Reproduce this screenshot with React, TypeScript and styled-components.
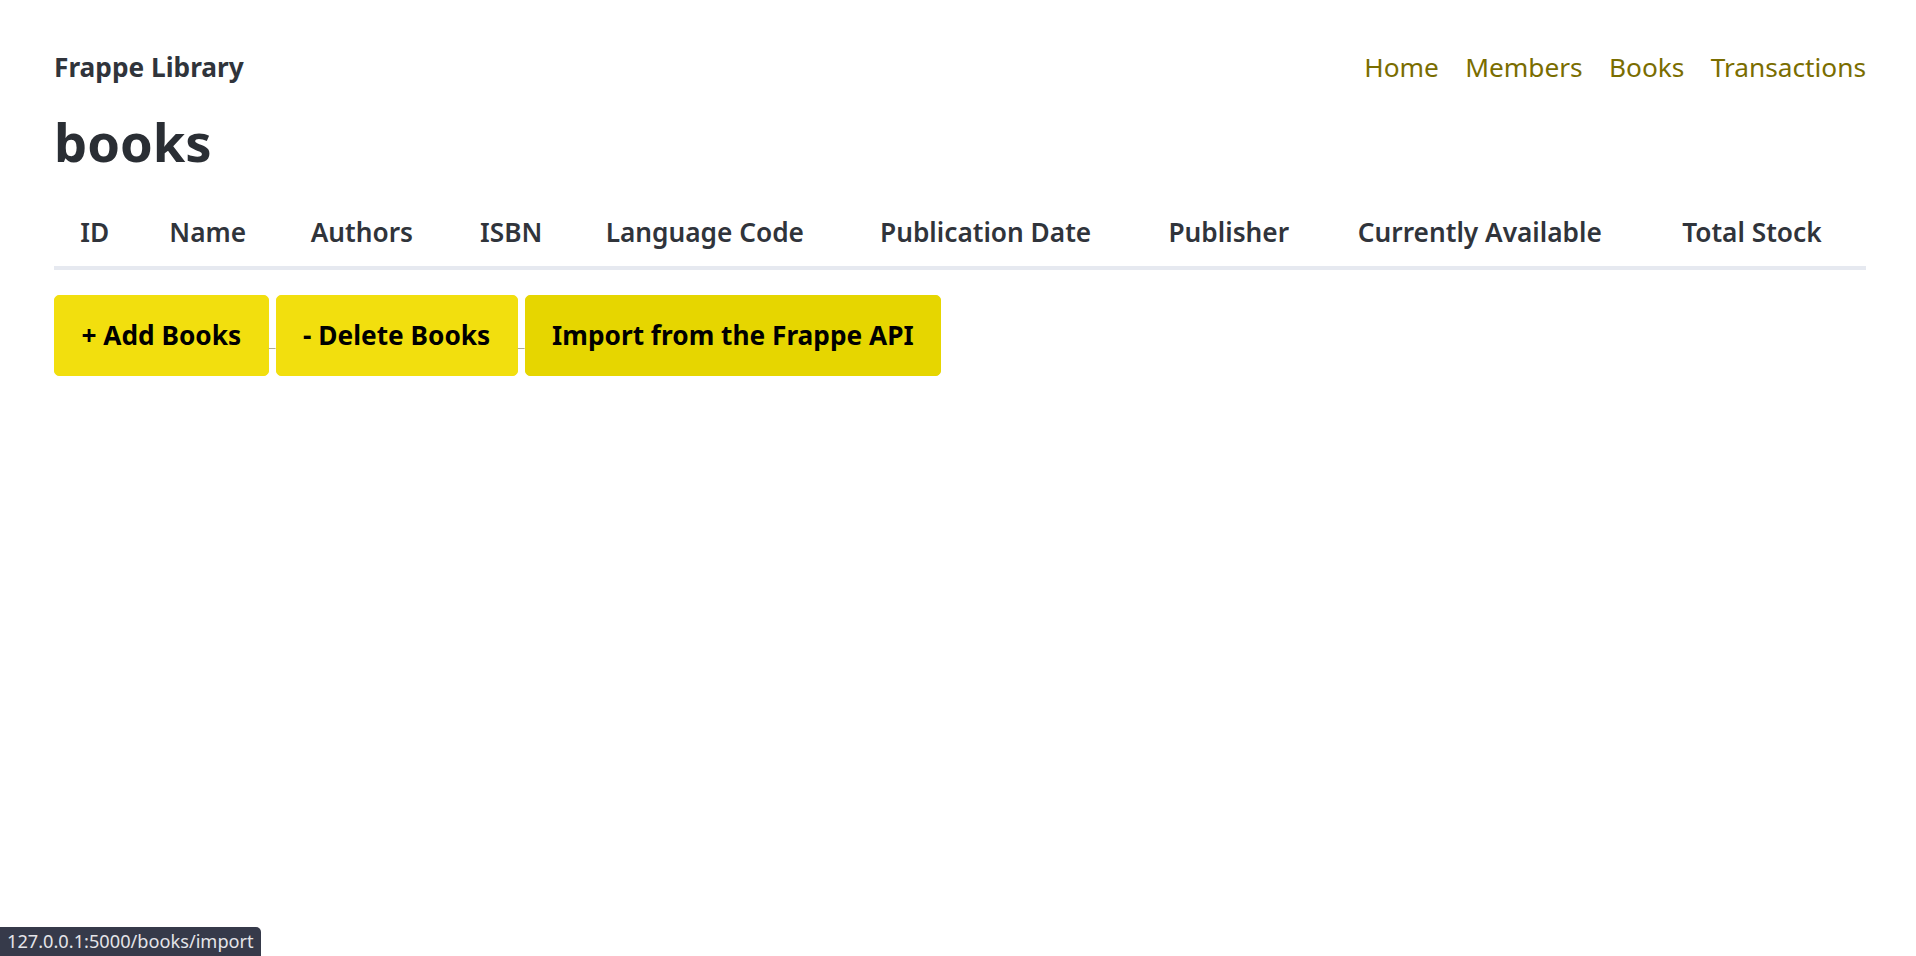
import React from "react";
import styled, { createGlobalStyle } from "styled-components";

const Global = createGlobalStyle`
  html, body { margin: 0; padding: 0; background: #ffffff; }
  body {
    font-family: "Noto Sans", "Open Sans", sans-serif;
    font-size: 26.25px;
    line-height: 1.5;
    color: #373c44;
  }
`;

const Page = styled.main`
  padding: 48px 50px 0 54px;
`;

const Nav = styled.nav`
  display: flex;
  justify-content: space-between;
  align-items: center;
  height: 39.375px;
`;

const Brand = styled.strong`
  font-weight: 700;
  color: #30343b;
`;

const Links = styled.ul`
  display: flex;
  gap: 26.25px;
  list-style: none;
  margin: 0;
  padding: 0;
`;

const NavLink = styled.a`
  color: #7a6d00;
  text-decoration: none;
`;

const Title = styled.h1`
  margin: 24.6px 0 0;
  font-size: 52.5px;
  line-height: 59px;
  font-weight: 700;
  color: #2a2e34;
`;

const Table = styled.table`
  width: 100%;
  border-collapse: collapse;
  border-spacing: 0;
  margin-top: 29.4px;
`;

const Th = styled.th`
  padding: 13.125px 26.25px;
  text-align: left;
  font-weight: 600;
  color: #30343b;
  border-bottom: 4.5px solid #e6e9f0;
  white-space: nowrap;
`;

const Actions = styled.a`
  display: block;
  margin-top: 25px;
  text-decoration: underline;
  text-decoration-color: #b2ae92;
  text-decoration-thickness: 1px;
  text-underline-offset: 3px;
  color: #000;
`;

const Button = styled.span<{ $active?: boolean }>`
  display: inline-block;
  padding: 19.8px 26.5px;
  border: 1px solid ${(p) => (p.$active ? "#e6d600" : "#f2df0e")};
  border-radius: 5px;
  background: ${(p) => (p.$active ? "#e6d600" : "#f2df0e")};
  color: #000;
  font-weight: 700;
  line-height: 39.375px;
`;

const Status = styled.div`
  position: fixed;
  left: 0;
  bottom: 0;
  height: 29px;
  padding: 0 7px;
  box-sizing: border-box;
  background: #363a4a;
  color: #e4e4e8;
  font-family: "Noto Sans", sans-serif;
  font-size: 18.2px;
  line-height: 29px;
  border-top-right-radius: 5px;
  white-space: nowrap;
`;

const headers = [
  "ID",
  "Name",
  "Authors",
  "ISBN",
  "Language Code",
  "Publication Date",
  "Publisher",
  "Currently Available",
  "Total Stock",
];

export default function App() {
  return (
    <>
      <Global />
      <Page>
        <Nav>
          <Brand>Frappe Library</Brand>
          <Links>
            <li><NavLink href="#">Home</NavLink></li>
            <li><NavLink href="#">Members</NavLink></li>
            <li><NavLink href="#">Books</NavLink></li>
            <li><NavLink href="#">Transactions</NavLink></li>
          </Links>
        </Nav>
        <Title>books</Title>
        <Table>
          <thead>
            <tr>
              {headers.map((h) => (
                <Th key={h}>{h}</Th>
              ))}
            </tr>
          </thead>
          <tbody></tbody>
        </Table>
        <Actions href="#">
          <Button>+ Add Books</Button>{" "}
          <Button>- Delete Books</Button>{" "}
          <Button $active>Import from the Frappe API</Button>
        </Actions>
      </Page>
      <Status>127.0.0.1:5000/books/import</Status>
    </>
  );
}
